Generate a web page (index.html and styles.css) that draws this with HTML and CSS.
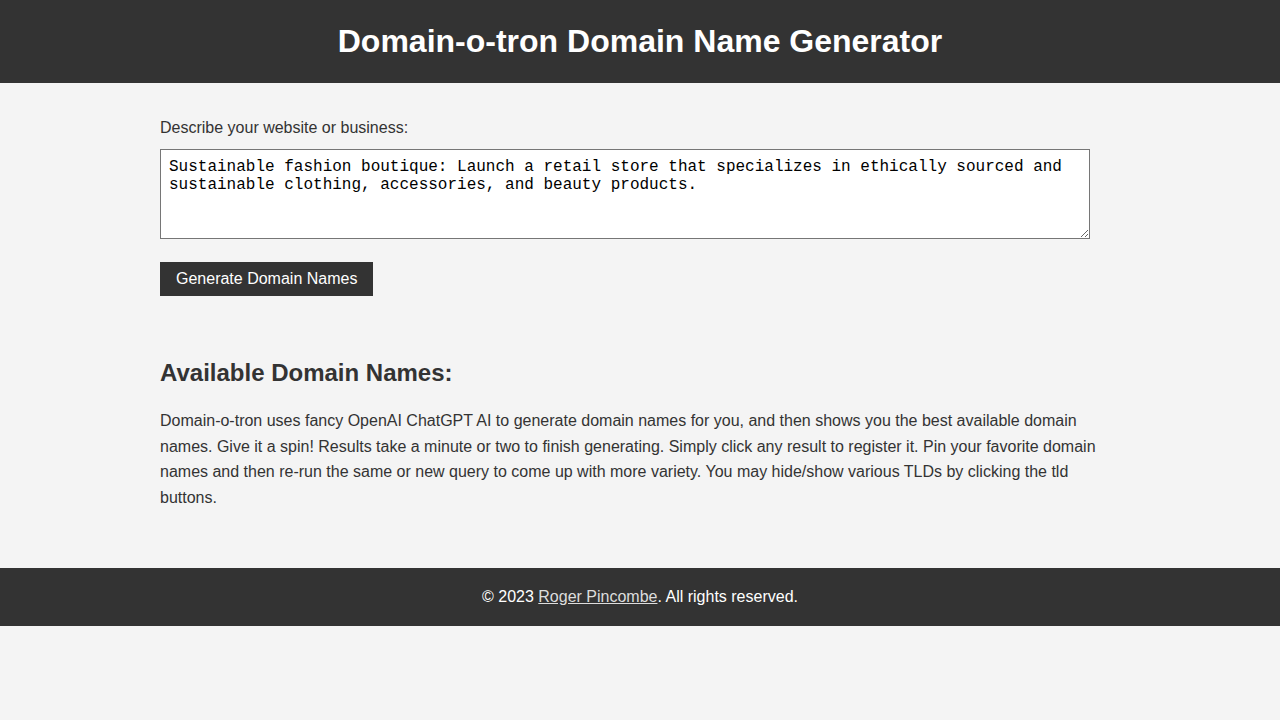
FILE: index.html
```html
<!doctype html>
<html>
  <head>
    <meta charset="UTF-8">
    <title>Domain-o-tron Domain Name Generator</title>
    <link rel="stylesheet" href="styles.css">
  </head>
  <body>
    <header class="site-header">
      <h1>Domain-o-tron Domain Name Generator</h1>
    </header>
    <main>
      <form id="domain-form" class="domain-form">
        <label for="description">Describe your website or business:</label>
        <textarea id="description" rows="4">Sustainable fashion boutique: Launch a retail store that specializes in ethically sourced and sustainable clothing, accessories, and beauty products.</textarea>
        <div>
          <button type="submit">Generate Domain Names</button>
        </div>
      </form>
      <section class="results">
        <h2>Available Domain Names:</h2>
        <p>Domain-o-tron uses fancy OpenAI ChatGPT AI to generate domain names for you, and then shows you the best available domain names. Give it a spin! Results take a minute or two to finish generating. Simply click any result to register it. Pin your favorite domain names and then re-run the same or new query to come up with more variety. You may hide/show various TLDs by clicking the tld buttons.</p>
      </section>
    </main>
    <footer class="site-footer">
      &copy; 2023 <a href="#">Roger Pincombe</a>. All rights reserved.
    </footer>
  </body>
</html>
```

FILE: styles.css
```css
* {
    box-sizing: border-box;
}

body {
    margin: 0;
    background: #f4f4f4;
    color: #333;
    font-family: "Liberation Sans", Arial, sans-serif;
    font-size: 16px;
}

.site-header {
    background: #333;
    color: #fff;
    padding: 23px 0;
    text-align: center;
}

.site-header h1 {
    margin: 0;
    font-size: 32px;
    line-height: 37px;
}

main {
    margin: 0 auto;
    max-width: 960px;
    padding: 36px 0 58px;
}

.domain-form label {
    display: block;
    line-height: 18px;
    margin-bottom: 12px;
}

.domain-form textarea {
    display: block;
    width: 930px;
    height: 90px;
    padding: 8px;
    border: 1px solid #767676;
    font-family: "Liberation Mono", "Courier New", monospace;
    font-size: 16px;
    line-height: 18px;
    color: #000;
    background: #fff;
    margin: 0 0 23px;
}

.domain-form button {
    background: #333;
    color: #fff;
    border: 0;
    padding: 8px 16px;
    font-family: "Liberation Sans", Arial, sans-serif;
    font-size: 16px;
    line-height: 18px;
    cursor: pointer;
}

.results {
    margin-top: 63px;
}

.results h2 {
    margin: 0 0 21px;
    font-size: 24px;
    line-height: 28px;
}

.results p {
    margin: 0;
    line-height: 25.6px;
}

.site-footer {
    background: #333;
    color: #fff;
    text-align: center;
    padding: 20px 0;
    line-height: 18px;
}

.site-footer a {
    color: #ddd;
}
```
